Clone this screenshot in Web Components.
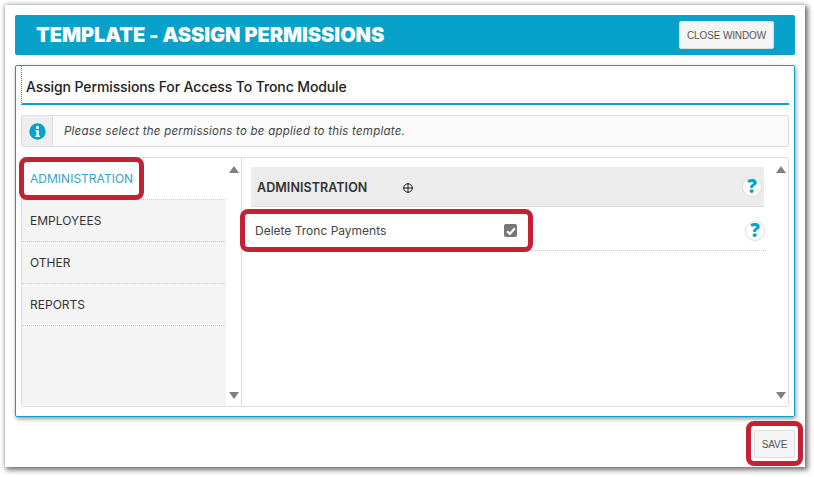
<!DOCTYPE html>
<html><head><meta charset="utf-8"><style>
html,body{margin:0;background:#fff;height:477px;overflow:hidden}
body{padding:5px 9px 10px 5px;box-sizing:border-box;font-family:Inter,"Liberation Sans",sans-serif;color:#333}
</style></head><body>
<template id="t-win"><style>
:host{display:flex;flex-direction:column;width:800px;height:462px;box-sizing:border-box;padding:10px 10px 0;background:#fff;box-shadow:2px 2px 5px 1px rgba(0,0,0,.55),-1px -1px 4px rgba(0,0,0,.12);position:relative}
.foot{display:flex;justify-content:flex-end;padding-top:13px}
</style><slot name="head"></slot><slot name="panel"></slot><div class="foot"><slot name="foot"></slot></div></template>

<template id="t-head"><style>
:host{display:flex;align-items:center;justify-content:space-between;height:40px;background:#08a1c9;border-radius:2px;padding:0 21px 0 21px;box-sizing:border-box}
h1{margin:0;font:900 20px/1 Inter,sans-serif;color:#fff;letter-spacing:-.05px}
</style><h1><slot></slot></h1><slot name="action"></slot></template>

<template id="t-btn"><style>
:host{display:inline-flex;align-items:center;justify-content:center;box-sizing:border-box;background:#f5f5f5;border:1px solid #ddd;border-radius:2px;padding-top:1px;font:400 10px/1 "Liberation Sans",Arial,sans-serif;letter-spacing:-.12px;color:#555;position:relative}
</style><slot></slot></template>

<template id="t-panel"><style>
:host{display:flex;flex-direction:column;height:352px;box-sizing:border-box;margin-top:10px;border:1px solid #08a1c9;border-radius:2px;padding:0 5px 9px;box-shadow:1px 2px 4px rgba(0,0,0,.4)}
.t{height:39px;box-sizing:border-box;border-bottom:2px solid #08a1c9;border-left:1px dotted #08a1c9;font:500 14px/41px Inter,sans-serif;color:#222;padding-left:4px;letter-spacing:-.11px}
</style><div class="t"><slot name="title"></slot></div><slot></slot></template>

<template id="t-info"><style>
:host{display:flex;height:32px;box-sizing:border-box;margin:10px 0;border:1px solid #ddd;border-radius:2px;background:#fafafa}
.i{width:31px;background:#eee;border-right:1px solid #ddd;display:flex;align-items:center;justify-content:center;box-sizing:border-box}
.m{font:italic 400 11.5px/30px Inter,sans-serif;color:#444;padding-left:11px;letter-spacing:.24px}
</style><div class="i"><svg width="17" height="17" viewBox="0 0 17 17"><circle cx="8.5" cy="8.5" r="8.2" fill="#08a1c9"/><rect x="7" y="3" width="3" height="3" rx=".8" fill="#fff"/><path d="M6.4 7.2h3.5v5.3h1v1.4H6.4v-1.4h1V8.6h-1z" fill="#fff"/></svg></div><div class="m"><slot></slot></div></template>

<template id="t-split"><style>
:host{display:flex;flex:1;min-height:0;border:1px solid #ddd;border-radius:2px}
.l{width:220px;flex:none;box-sizing:border-box;display:flex;flex-direction:column;border-right:1px solid #ddd;position:relative}
.r{flex:1;display:flex;min-width:0}
</style><div class="l"><slot name="nav"></slot></div><div class="r"><slot></slot></div></template>

<template id="t-nav"><style>
:host{display:flex;flex:1;min-height:0}
.c{width:204px;background:#f4f4f4;display:flex;flex-direction:column}
</style><div class="c"><slot></slot></div><app-scroll></app-scroll></template>

<template id="t-item"><style>
:host{display:flex;align-items:center;height:42px;box-sizing:border-box;border-bottom:1px dotted #ccc;padding-left:8px;font:400 12px/1 Inter,sans-serif;color:#333;position:relative;letter-spacing:.02px}
:host([active]){background:#fff;color:#35a3cf}
.mark{display:none;position:absolute;left:-3px;top:-1px;width:125px;height:43px;box-sizing:border-box;border:5px solid #c42136;border-radius:8px;pointer-events:none}
:host([marked]) .mark{display:block}
</style><slot></slot><span class="mark"></span></template>

<template id="t-scroll"><style>
:host{display:flex;flex-direction:column;justify-content:space-between;align-items:center;flex:1;padding:8px 0 7px;box-sizing:border-box;background:#fff}
i{display:block;width:0;height:0;border-left:5px solid transparent;border-right:5px solid transparent}
.u{border-bottom:7px solid #808080}.d{border-top:7px solid #808080}
</style><i class="u"></i><i class="d"></i></template>

<template id="t-content"><style>
:host{display:flex;flex:1;min-width:0}
.c{width:531px;flex:none;padding:9px 0 0 9px;box-sizing:border-box;display:flex;flex-direction:column}
</style><div class="c"><slot></slot></div><app-scroll></app-scroll></template>

<template id="t-sec"><style>
:host{display:flex;align-items:center;justify-content:space-between;height:40px;box-sizing:border-box;background:#ececec;border-bottom:1px solid #ddd;padding:3px 2px 0 6px;font:600 12.5px/1 Inter,sans-serif;color:#333;width:513px;letter-spacing:.07px}
.a{display:flex;align-items:center}
.x{margin:-1px 0 0 36px;display:flex}
</style><span class="a"><slot></slot><span class="x"><svg width="10" height="10" viewBox="0 0 10 10" fill="none" stroke="#111" stroke-width="1"><circle cx="5" cy="5" r="4.2" fill="#fff"/><path d="M5 0v10M0 5h10"/></svg></span></span><app-help style="margin-top:-3px"></app-help></template>

<template id="t-help"><style>
:host{display:flex;align-items:center;justify-content:center;width:20px;height:20px;box-sizing:border-box;border:1px solid #ddd;border-radius:50%;background:#fff;font:800 19px/1 "Open Sans","Liberation Sans",sans-serif;color:#08a1c9}
</style>?</template>

<template id="t-row"><style>
:host{display:flex;align-items:center;height:44px;box-sizing:border-box;border-bottom:1px dotted #ccc;padding:4px 1px 0 4px;width:515px;font:400 12px/1 Inter,sans-serif;color:#444;position:relative}
.n{width:249px}
.b{width:13px;height:13px;border-radius:2px;background:#777;display:flex;align-items:center;justify-content:center}
.sp{flex:1}
.mark{position:absolute;left:-11px;top:2px;width:293px;height:43px;box-sizing:border-box;border:5px solid #c42136;border-radius:8px;pointer-events:none}
</style><span class="n"><slot></slot></span><span class="b"><svg width="12" height="12" viewBox="0 0 11 11" fill="none" stroke="#fff" stroke-width="2"><path d="M2 5.8l2.4 2.4L9 3"/></svg></span><span class="sp"></span><app-help></app-help><span class="mark"></span></template>

<app-window>
  <app-head slot="head">TEMPLATE - ASSIGN PERMISSIONS<app-btn slot="action" style="width:95px;height:28px">CLOSE WINDOW</app-btn></app-head>
  <app-panel slot="panel">
    <span slot="title">Assign Permissions For Access To Tronc Module</span>
    <app-info>Please select the permissions to be applied to this template.</app-info>
    <app-split>
      <app-nav slot="nav">
        <app-item active marked>ADMINISTRATION</app-item>
        <app-item>EMPLOYEES</app-item>
        <app-item>OTHER</app-item>
        <app-item>REPORTS</app-item>
      </app-nav>
      <app-content>
        <app-sec>ADMINISTRATION</app-sec>
        <app-row>Delete Tronc Payments</app-row>
      </app-content>
    </app-split>
  </app-panel>
  <app-save slot="foot"></app-save>
</app-window>
<script>
const def=(n,t)=>customElements.define(n,class extends HTMLElement{constructor(){super();this.attachShadow({mode:'open'}).appendChild(document.getElementById(t).content.cloneNode(true))}});
[['app-window','t-win'],['app-head','t-head'],['app-btn','t-btn'],['app-panel','t-panel'],['app-info','t-info'],['app-split','t-split'],['app-nav','t-nav'],['app-item','t-item'],['app-scroll','t-scroll'],['app-content','t-content'],['app-sec','t-sec'],['app-help','t-help'],['app-row','t-row']].forEach(a=>def(...a));
customElements.define('app-save',class extends HTMLElement{constructor(){super();this.attachShadow({mode:'open'}).innerHTML=`<style>:host{display:block;position:relative;width:41px;height:28px}
.mark{position:absolute;left:-8px;top:-9px;width:57px;height:45px;box-sizing:border-box;border:5px solid #c42136;border-radius:8px}
app-btn{width:41px;height:28px;position:relative}</style><app-btn>SAVE</app-btn><span class="mark"></span>`}});
</script>
</body></html>
